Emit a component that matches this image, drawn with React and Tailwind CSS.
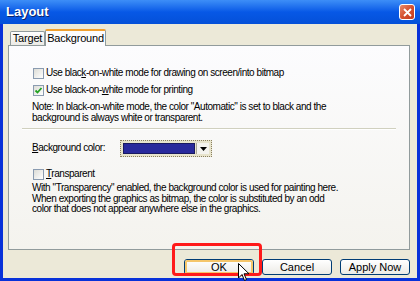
import React from "react";

const font = { fontFamily: '"Liberation Sans", Arial, sans-serif' };

function CheckBox({ checked }) {
  return (
    <div className="w-[11px] h-[11px] border border-[#8a9bb0] bg-gradient-to-br from-[#dcdcd6] to-white flex items-center justify-center shrink-0">
      {checked && (
        <svg width="9" height="9" viewBox="0 0 9 9">
          <path d="M1.5 4.5 L3.5 6.5 L7.5 2" fill="none" stroke="#21a121" strokeWidth="1.8" />
        </svg>
      )}
    </div>
  );
}

function XpButton({ children, isDefault }) {
  return (
    <div className="w-[70px] h-[16px] rounded-[3px] border border-[#003c74] bg-gradient-to-b from-white to-[#ecebe6] flex items-center justify-center relative">
      {isDefault && (
        <div className="absolute inset-0 rounded-[2px] border-2 border-[#f5c66b]" />
      )}
      <span className="relative text-[11px] text-black leading-none">{children}</span>
    </div>
  );
}

export default function App() {
  return (
    <div className="w-[420px] h-[281px] bg-[#0831d9] flex flex-col overflow-hidden relative" style={font}>
      {/* title bar */}
      <div className="h-[24px] shrink-0 bg-gradient-to-b from-[#3d8ef7] via-[#0758e6] to-[#0450d8] flex items-center justify-between pl-[6px] pr-[5px]">
        <span className="text-white font-bold text-[13px] [text-shadow:1px_1px_0_#0a246a]">Layout</span>
        <div className="w-[16px] h-[16px] rounded-[3px] border border-white bg-gradient-to-br from-[#e88a6b] via-[#d4502f] to-[#c23a1e] flex items-center justify-center">
          <svg width="9" height="9" viewBox="0 0 9 9">
            <path d="M1 1 L8 8 M8 1 L1 8" stroke="white" strokeWidth="1.8" />
          </svg>
        </div>
      </div>

      {/* window body */}
      <div className="flex-1 mx-[3px] mb-[3px] bg-[#ece9d8] flex flex-col pl-[5px] pr-[7px] pt-[4px]">
        {/* tabs */}
        <div className="flex items-end h-[17px] pl-[2px] relative z-10 text-[11px] tracking-[-0.2px]">
          <div className="h-[14px] w-[35px] border border-b-0 border-[#919b9c] bg-gradient-to-b from-white to-[#ecebe6] rounded-t-[2px] flex items-center justify-center text-black">
            Target
          </div>
          <div className="h-[17px] w-[61px] -mb-px border border-b-0 border-[#919b9c] border-t-[#f0a030] border-t-2 bg-[#fcfcfe] rounded-t-[2px] flex items-center justify-center text-black">
            Background
          </div>
        </div>

        {/* panel */}
        <div className="h-[205px] border border-[#919b9c] bg-gradient-to-b from-[#fcfcfe] to-[#f4f3ee] flex flex-col pt-[22px] text-[10px] tracking-[-0.45px] text-black leading-[10.5px]">
          <div className="pl-[24px] flex flex-col gap-[6px]">
            <div className="flex items-center">
              <CheckBox />
              <span className="ml-[2px]">Use blac<u>k</u>-on-white mode for drawing on screen/into bitmap</span>
            </div>
            <div className="flex items-center">
              <CheckBox checked />
              <span className="ml-[2px]">Use black-on-<u>w</u>hite mode for printing</span>
            </div>
          </div>
          <div className="pl-[23px] mt-[6px]">
            <div>Note: In black-on-white mode, the color "Automatic" is set to black and the</div>
            <div>background is always white or transparent.</div>
          </div>

          <div className="mx-[13px] mt-[5px] h-[2px] border-t border-[#d0d0bf] border-b border-b-white" />

          <div className="flex items-center pl-[23px] mt-[10px]">
            <span className="w-[88px] whitespace-nowrap"><u>B</u>ackground color:</span>
            <div className="w-[92px] h-[17px] border border-dotted border-[#8a8060] bg-[#e8e4cc] p-[2px] flex gap-[1px]">
              <div className="flex-1 bg-[#2a2a9c] border border-[#1a1a60]" />
              <div className="w-[13px] bg-[#f4f3ee] border-l border-[#aca899] flex items-center justify-center">
                <svg width="7" height="4" viewBox="0 0 7 4">
                  <path d="M0 0 L7 0 L3.5 4 Z" fill="black" />
                </svg>
              </div>
            </div>
          </div>

          <div className="flex items-center pl-[24px] mt-[12px]">
            <CheckBox />
            <span className="ml-[2px]"><u>T</u>ransparent</span>
          </div>
          <div className="pl-[23px] mt-[3px]">
            <div>With "Transparency" enabled, the background color is used for painting here.</div>
            <div>When exporting the graphics as bitmap, the color is substituted by an odd</div>
            <div>color that does not appear anywhere else in the graphics.</div>
          </div>
        </div>

        {/* buttons */}
        <div className="flex justify-end gap-[8px] mt-[9px]">
          <XpButton isDefault>OK</XpButton>
          <XpButton>Cancel</XpButton>
          <XpButton>Apply Now</XpButton>
        </div>
      </div>

      {/* red highlight */}
      <div className="absolute left-[172px] top-[243px] w-[90px] h-[33px] border-[3px] border-[#ff1a1a] rounded-[4px]" />

      {/* cursor */}
      <svg className="absolute left-[238px] top-[263px]" width="12" height="19" viewBox="0 0 12 19">
        <path d="M0.5 0.5 L0.5 15 L4 11.5 L6.5 17.5 L8.5 16.5 L6 10.8 L11 10.8 Z" fill="white" stroke="black" strokeWidth="1" />
      </svg>
    </div>
  );
}
